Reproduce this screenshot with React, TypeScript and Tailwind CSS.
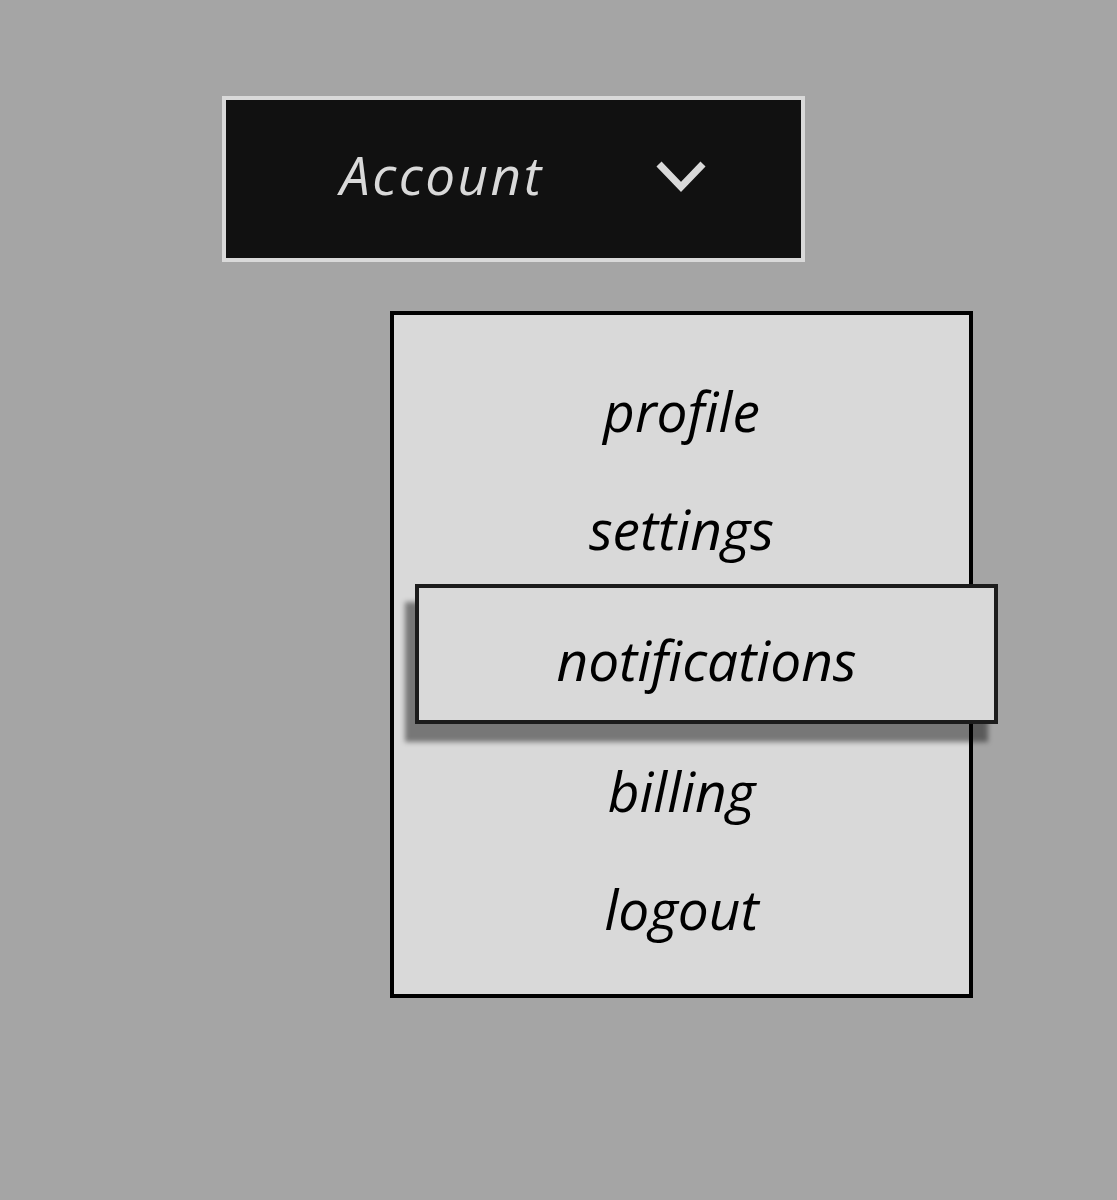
import { useState } from 'react';

const ITEMS = ['profile', 'settings', 'notifications', 'billing', 'logout'];

function Chevron() {
  return (
    <svg width="52" height="36" viewBox="0 0 52 36" fill="none" className="block">
      <polyline points="4,5 26,28 48,5" stroke="#d9d9d9" strokeWidth="7" strokeLinecap="butt" strokeLinejoin="miter" />
    </svg>
  );
}

export default function App() {
  const [active] = useState('notifications');

  return (
    <div
      className="min-h-[1200px] w-full bg-[#a5a5a5] pt-[96px]"
      style={{ fontFamily: '"Open Sans", "Noto Sans", sans-serif' }}
    >
      {/* trigger */}
      <button className="ml-[222px] flex h-[166px] w-[583px] items-center border-4 border-[#d9d9d9] bg-[#111111] pb-[8px] pl-[114px] text-[#d9d9d9]">
        <span className="text-[53px] leading-[1.2] tracking-[2.5px] italic">Account</span>
        <span className="ml-auto mr-[94px] mt-[4px]">
          <Chevron />
        </span>
      </button>

      {/* menu */}
      <div className="ml-[390px] mt-[49px] w-[583px] border-4 border-black bg-[#d9d9d9] pt-[37px] pb-[26px]">
        {ITEMS.map(item =>
          item === active ? (
            <div key={item} className="h-[144px]">
              {/* hovered row lifts out of the list */}
              <div className="flex h-[140px] w-[583px] translate-x-[21px] -translate-y-[4px] items-center justify-center border-4 border-[#1c1c1c] bg-[#d9d9d9] pt-[12px] shadow-[-10px_18px_5px_rgba(0,0,0,0.45)]">
                <span className="text-[55px] leading-[1.2] italic text-black">{item}</span>
              </div>
            </div>
          ) : (
            <div key={item} className="flex h-[118px] items-center justify-center">
              <span className="text-[55px] leading-[1.2] italic text-black">{item}</span>
            </div>
          )
        )}
      </div>
    </div>
  );
}
